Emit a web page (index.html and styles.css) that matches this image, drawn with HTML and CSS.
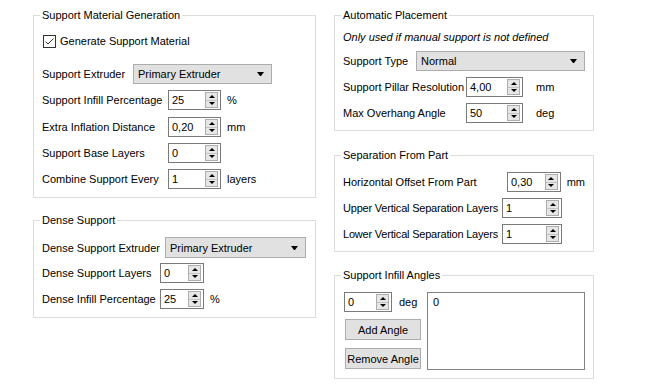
FILE: index.html
```html
<!DOCTYPE html>
<html lang="en">
<head>
<meta charset="UTF-8">
<meta name="viewport" content="width=device-width, initial-scale=1.0">
<title>Support Settings</title>
<link rel="stylesheet" href="styles.css">
</head>
<body>

<div class="page">
  <!-- left column -->
  <div class="column left-col">
    <div class="group gen-group">
      <div class="group-title">Support Material Generation</div>
      <div class="check-row">
        <span class="checkbox">
          <svg width="13" height="13" viewBox="0 0 13 13">
            <rect x="0.5" y="0.5" width="12" height="12" fill="#fff" stroke="#333"/>
            <polyline points="2.5,6.5 5,9 10.5,3.5" fill="none" stroke="#333" stroke-width="1"/>
          </svg>
        </span>
        Generate Support Material
      </div>
      <div class="row combo-row">
        <span class="label gen-combo-label">Support Extruder</span>
        <div class="combo gen-combo">Primary Extruder<span class="arrow"></span></div>
      </div>
      <div class="row">
        <span class="label gen-label">Support Infill Percentage</span>
        <div class="spin gen-spin"><span class="value">25</span><span class="spin-btns"><i class="up"></i><i class="down"></i></span></div>
        <span class="unit">%</span>
      </div>
      <div class="row">
        <span class="label gen-label">Extra Inflation Distance</span>
        <div class="spin gen-spin"><span class="value">0,20</span><span class="spin-btns"><i class="up"></i><i class="down"></i></span></div>
        <span class="unit">mm</span>
      </div>
      <div class="row">
        <span class="label gen-label">Support Base Layers</span>
        <div class="spin gen-spin"><span class="value">0</span><span class="spin-btns"><i class="up"></i><i class="down"></i></span></div>
      </div>
      <div class="row">
        <span class="label gen-label">Combine Support Every</span>
        <div class="spin gen-spin"><span class="value">1</span><span class="spin-btns"><i class="up"></i><i class="down"></i></span></div>
        <span class="unit">layers</span>
      </div>
    </div>

    <div class="group dense-group">
      <div class="group-title">Dense Support</div>
      <div class="row combo-row">
        <span class="label dense-combo-label">Dense Support Extruder</span>
        <div class="combo dense-combo">Primary Extruder<span class="arrow"></span></div>
      </div>
      <div class="row">
        <span class="label dense-label">Dense Support Layers</span>
        <div class="spin dense-spin"><span class="value">0</span><span class="spin-btns"><i class="up"></i><i class="down"></i></span></div>
      </div>
      <div class="row">
        <span class="label dense-label">Dense Infill Percentage</span>
        <div class="spin dense-spin"><span class="value">25</span><span class="spin-btns"><i class="up"></i><i class="down"></i></span></div>
        <span class="unit">%</span>
      </div>
    </div>
  </div>

  <!-- right column -->
  <div class="column right-col">
    <div class="group auto-group">
      <div class="group-title">Automatic Placement</div>
      <div class="note">Only used if manual support is not defined</div>
      <div class="row combo-row">
        <span class="label auto-combo-label">Support Type</span>
        <div class="combo auto-combo">Normal<span class="arrow"></span></div>
      </div>
      <div class="row">
        <span class="label auto-label">Support Pillar Resolution</span>
        <div class="spin auto-spin"><span class="value">4,00</span><span class="spin-btns"><i class="up"></i><i class="down"></i></span></div>
        <span class="unit wide">mm</span>
      </div>
      <div class="row">
        <span class="label auto-label">Max Overhang Angle</span>
        <div class="spin auto-spin"><span class="value">50</span><span class="spin-btns"><i class="up"></i><i class="down"></i></span></div>
        <span class="unit wide">deg</span>
      </div>
    </div>

    <div class="group sep-group">
      <div class="group-title">Separation From Part</div>
      <div class="row first-row">
        <span class="label sep-label-a">Horizontal Offset From Part</span>
        <div class="spin sep-spin-a"><span class="value">0,30</span><span class="spin-btns"><i class="up"></i><i class="down"></i></span></div>
        <span class="unit">mm</span>
      </div>
      <div class="row">
        <span class="label sep-label">Upper Vertical Separation Layers</span>
        <div class="spin sep-spin"><span class="value">1</span><span class="spin-btns"><i class="up"></i><i class="down"></i></span></div>
      </div>
      <div class="row">
        <span class="label sep-label">Lower Vertical Separation Layers</span>
        <div class="spin sep-spin"><span class="value">1</span><span class="spin-btns"><i class="up"></i><i class="down"></i></span></div>
      </div>
    </div>

    <div class="group angles-group">
      <div class="group-title">Support Infill Angles</div>
      <div class="angles-body">
        <div class="angles-controls">
          <div class="angle-row">
            <div class="spin angle-spin"><span class="value">0</span><span class="spin-btns"><i class="up"></i><i class="down"></i></span></div>
            <span class="unit deg">deg</span>
          </div>
          <button class="btn add-btn">Add Angle</button>
          <button class="btn remove-btn">Remove Angle</button>
        </div>
        <div class="angle-list">0</div>
      </div>
    </div>
  </div>
</div>

</body>
</html>
```

FILE: styles.css
```css
body {
  margin: 0;
  background-color: #fff;
  font-family: "Liberation Sans", Arial, sans-serif;
  font-size: 11px;
  color: #000;
}
.page {
  display: flex;
  gap: 18px;
  padding: 15px 0 0 33px;
}
.left-col {
  width: 283px;
}
.right-col {
  width: 260px;
}
.group {
  border: 1px solid #dcdcdc;
  padding: 0 8px;
  box-sizing: border-box;
}
.group-title {
  width: fit-content;
  margin: -8px 0 0 -2px;
  padding: 0 2px;
  line-height: 14px;
  background-color: #fff;
}

/* rows */
.row {
  display: flex;
  align-items: center;
  height: 20px;
  margin-top: 6px;
}
.label {
  flex: none;
  white-space: nowrap;
}
.unit {
  margin-left: 6px;
}
.unit.wide {
  margin-left: 13px;
}

.check-row {
  display: flex;
  align-items: center;
  height: 14px;
  margin-top: 12px;
}
.checkbox {
  display: flex;
  margin: 0 4px 0 1px;
}

/* combo box */
.combo {
  display: flex;
  align-items: center;
  height: 20px;
  padding: 0 7px 0 4px;
  background-color: #e1e1e1;
  border: 1px solid #adadad;
  box-sizing: border-box;
}
.combo .arrow {
  margin-left: auto;
  width: 1px;
  border-left: 3px solid transparent;
  border-right: 3px solid transparent;
  border-top: 4px solid #000;
}

/* spin box */
.spin {
  display: flex;
  align-items: center;
  height: 20px;
  border: 1px solid #7a7a7a;
  background-color: #fff;
  box-sizing: border-box;
  padding-left: 3px;
}
.spin .value {
  flex: 1;
}
.spin-btns {
  display: flex;
  flex-direction: column;
  width: 13px;
  height: 16px;
  margin-right: 2px;
  border: 1px solid #adadad;
  background-color: #e6e6e6;
  box-sizing: border-box;
}
.spin-btns i {
  flex: 1;
  display: flex;
  align-items: center;
  justify-content: center;
}
.spin-btns i.up {
  border-bottom: 1px solid #c4c4c4;
}
.spin-btns i::after {
  content: "";
  border-left: 3px solid transparent;
  border-right: 3px solid transparent;
}
.spin-btns i.up::after {
  border-bottom: 3px solid #000;
}
.spin-btns i.down::after {
  border-top: 3px solid #000;
}

/* support material generation */
.gen-group {
  padding-bottom: 8px;
}
.gen-group .combo-row {
  margin-top: 16px;
}
.gen-group .combo-row + .row + .row {
  margin-top: 7px;
}
.gen-combo-label {
  width: 91px;
}
.gen-combo {
  width: 139px;
}
.gen-label {
  width: 126px;
}
.gen-spin {
  width: 53px;
}

/* dense support */
.dense-group {
  margin-top: 22px;
  padding-bottom: 8px;
}
.dense-group .combo-row {
  margin-top: 10px;
  height: 21px;
}
.dense-group .combo {
  height: 21px;
}
.dense-combo-label {
  width: 123px;
}
.dense-combo {
  width: 141px;
}
.dense-group .row + .row {
  margin-top: 5px;
}
.dense-group .row + .row + .row {
  margin-top: 6px;
}
.dense-label {
  width: 118px;
}
.dense-spin {
  width: 44px;
}

/* automatic placement */
.auto-group {
  padding-bottom: 7px;
}
.note {
  margin-top: 8px;
  line-height: 14px;
  font-style: italic;
}
.auto-group .combo-row {
  margin-top: 7px;
}
.auto-combo-label {
  width: 73px;
}
.auto-combo {
  width: 169px;
}
.auto-label {
  width: 123px;
}
.auto-spin {
  width: 57px;
}

/* separation */
.sep-group {
  margin-top: 24px;
  padding-bottom: 7px;
}
.sep-group .first-row {
  margin-top: 10px;
}
.sep-label-a {
  width: 164px;
}
.sep-spin-a {
  width: 55px;
}
.sep-label {
  width: 159px;
  letter-spacing: -0.2px;
}
.sep-spin {
  width: 60px;
}

/* infill angles */
.angles-group {
  margin-top: 23px;
  padding-bottom: 8px;
}
.angles-body {
  display: flex;
  margin-top: 10px;
}
.angles-controls {
  width: 84px;
  flex: none;
}
.angle-row {
  display: flex;
  align-items: center;
  margin-left: 1px;
}
.angle-spin {
  width: 48px;
}
.unit.deg {
  margin-left: 7px;
}
.btn {
  display: block;
  width: 76px;
  height: 21px;
  margin-left: 2px;
  padding: 0;
  background-color: #e1e1e1;
  border: 1px solid #adadad;
  font-family: inherit;
  font-size: 11px;
  color: #000;
}
.add-btn {
  margin-top: 7px;
}
.remove-btn {
  margin-top: 8px;
}
.angle-list {
  width: 158px;
  height: 78px;
  padding: 2px 5px;
  border: 1px solid #828282;
  box-sizing: border-box;
  line-height: 14px;
}
```
